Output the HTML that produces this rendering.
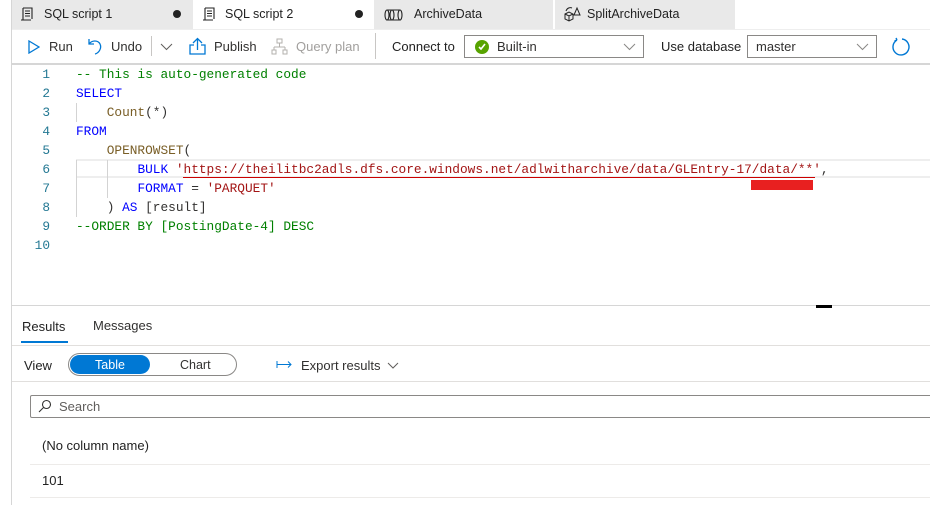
<!DOCTYPE html>
<html><head><meta charset="utf-8"><style>
*{margin:0;padding:0;box-sizing:border-box}
body{width:930px;height:505px;background:#fff;font-family:"Liberation Sans",sans-serif;font-size:13px;color:#323130;position:relative;overflow:hidden}
.a{position:absolute}
.tab{position:absolute;top:0;height:29px;background:#e9e9e9;font-size:12.5px;line-height:29px;color:#222}
.code{font-family:"Liberation Mono",monospace;font-size:12.8px;white-space:pre;line-height:19px}
.ln{position:absolute;width:40px;text-align:right;left:10px;color:#237893;font-family:"Liberation Mono",monospace;font-size:12.8px;line-height:19px}
.k{color:#0000ff}.c{color:#008000}.s{color:#a31515}.f{color:#795e26}
</style></head><body>
<div class="a" style="left:11px;top:0;width:1px;height:505px;background:#d6d6d6"></div>
<div class="tab" style="left:12px;width:181px"><svg class="a" style="left:8px;top:7px" width="14" height="15" viewBox="0 0 14 15" fill="none" stroke="#222" stroke-width="1.1"><path d="M3 1h9v11M3 1v12h8M1 13h9M5 4h5M5 6.5h5M5 9h5"/></svg><span class="a" style="left:32px">SQL script 1</span><span class="a" style="left:161px;top:10px;width:8px;height:8px;border-radius:4px;background:#222"></span></div>
<div class="tab" style="left:193px;width:180px;background:#fff"><svg class="a" style="left:9px;top:7px" width="14" height="15" viewBox="0 0 14 15" fill="none" stroke="#222" stroke-width="1.1"><path d="M3 1h9v11M3 1v12h8M1 13h9M5 4h5M5 6.5h5M5 9h5"/></svg><span class="a" style="left:32px">SQL script 2</span><span class="a" style="left:162px;top:10px;width:8px;height:8px;border-radius:4px;background:#222"></span></div>
<div class="tab" style="left:373px;width:180px;border-left:1px solid #fff"><svg class="a" style="left:10px;top:9px" width="20" height="12" viewBox="0 0 20 12" fill="none" stroke="#222" stroke-width="1.1"><ellipse cx="3" cy="6" rx="2" ry="5"/><ellipse cx="8" cy="6" rx="2" ry="5"/><path d="M3 1h13M3 11h13"/><ellipse cx="16" cy="6" rx="2" ry="5"/></svg><span class="a" style="left:40px">ArchiveData</span></div>
<div class="tab" style="left:553px;width:182px;border-left:2px solid #fff"><svg class="a" style="left:8px;top:6px" width="18" height="16" viewBox="0 0 18 16" fill="none" stroke="#222" stroke-width="1"><path d="M2 8l4-2 4 2v5l-4 2-4-2zM2 8l4 2 4-2M6 10v5M11 9l3-7 3 7zM3 5c1-3 4-4 6-3"/></svg><span class="a" style="left:32px">SplitArchiveData</span></div>
<div class="a" style="left:12px;top:29px;width:918px;height:1px;background:#eee"></div>
<!-- toolbar -->
<svg class="a" style="left:28px;top:40px" width="12" height="14" viewBox="0 0 12 14" fill="none" stroke="#0078d4" stroke-width="1.3"><path d="M1 1l10 6-10 6z"/></svg>
<span class="a" style="left:49px;top:39px">Run</span>
<svg class="a" style="left:88px;top:38px" width="15" height="17" viewBox="0 0 15 17" fill="none" stroke="#0078d4" stroke-width="1.3"><path d="M1 1v5h5M1 6c3-4 9-4 11 0 2 4-1 9-5 10"/></svg>
<span class="a" style="left:111px;top:39px">Undo</span>
<div class="a" style="left:151px;top:36px;width:1px;height:20px;background:#c8c6c4"></div>
<svg class="a" style="left:160px;top:43px" width="13" height="8" viewBox="0 0 13 8" fill="none" stroke="#605e5c" stroke-width="1"><path d="M1 1l5.5 5.5L12 1"/></svg>
<svg class="a" style="left:189px;top:37px" width="17" height="18" viewBox="0 0 17 18" fill="none" stroke="#0078d4" stroke-width="1.3"><path d="M8.5 13V2M4 6l4.5-4.5L13 6M5 8H1v9h15V8h-4"/></svg>
<span class="a" style="left:214px;top:39px">Publish</span>
<svg class="a" style="left:271px;top:38px" width="17" height="17" viewBox="0 0 17 17" fill="none" stroke="#b3b0ad" stroke-width="1"><path d="M6 1h5v4H6zM8.5 5v4M3 9h11M3 9v3M14 9v3M1 12h4v4H1zM12 12h4v4h-4z"/></svg>
<span class="a" style="left:296px;top:39px;color:#a19f9d">Query plan</span>
<div class="a" style="left:375px;top:33px;width:1px;height:26px;background:#c8c6c4"></div>
<span class="a" style="left:392px;top:39px;color:#222">Connect to</span>
<div class="a" style="left:464px;top:35px;width:180px;height:23px;border:1px solid #8a8886"></div>
<div class="a" style="left:475px;top:40px;width:14px;height:14px;border-radius:7px;background:#57a300"></div>
<svg class="a" style="left:478px;top:43px" width="8" height="8" viewBox="0 0 8 8" fill="none" stroke="#fff" stroke-width="1.6"><path d="M1 4l2 2 4-5"/></svg>
<span class="a" style="left:497px;top:39px">Built-in</span>
<svg class="a" style="left:623px;top:43px" width="13" height="8" viewBox="0 0 13 8" fill="none" stroke="#8a8886" stroke-width="1"><path d="M1 1l5.5 5.5L12 1"/></svg>
<span class="a" style="left:661px;top:39px;color:#222">Use database</span>
<div class="a" style="left:747px;top:35px;width:130px;height:23px;border:1px solid #8a8886"></div>
<span class="a" style="left:756px;top:39px">master</span>
<svg class="a" style="left:856px;top:43px" width="13" height="8" viewBox="0 0 13 8" fill="none" stroke="#8a8886" stroke-width="1"><path d="M1 1l5.5 5.5L12 1"/></svg>
<svg class="a" style="left:891px;top:37px" width="19" height="19" viewBox="0 0 19 19" fill="none" stroke="#0078d4" stroke-width="1.4"><path d="M6 3A8 8 0 1 0 11 2M6 3L5 1M6 3 3.5 4"/></svg>
<div class="a" style="left:12px;top:63px;width:918px;height:2px;background:#d6d6d6"></div>
<!-- editor -->
<div class="a" style="left:76px;top:159px;width:854px;height:19px;border-top:2px solid #eee;border-bottom:2px solid #eee"></div>
<div class="a" style="left:76px;top:103px;width:1px;height:19px;background:#d3d3d3"></div>
<div class="a" style="left:76px;top:160px;width:1px;height:57px;background:#d3d3d3"></div>
<div class="a" style="left:107px;top:160px;width:1px;height:38px;background:#d3d3d3"></div>
<div class="ln" style="top:65px">1<br>2<br>3<br>4<br>5<br>6<br>7<br>8<br>9<br>10</div>
<div class="a code" style="left:76px;top:65px"><span class="c">-- This is auto-generated code</span>
<span class="k">SELECT</span>
    <span class="f">Count</span>(*)
<span class="k">FROM</span>
    <span class="f">OPENROWSET</span>(
        <span class="k">BULK</span> <span class="s">'https://theilitbc2adls.dfs.core.windows.net/adlwitharchive/data/GLEntry-17/data/**'</span>,
        <span class="k">FORMAT</span> = <span class="s">'PARQUET'</span>
    ) <span class="k">AS</span> [result]
<span class="c">--ORDER BY [PostingDate-4] DESC</span>
</div>
<div class="a" style="left:183px;top:177px;width:632px;height:1px;background:#c00"></div>
<div class="a" style="left:751px;top:180px;width:62px;height:10px;background:#e82020"></div>
<div class="a" style="left:12px;top:305px;width:918px;height:1px;background:#d6d6d6"></div>
<div class="a" style="left:816px;top:305px;width:16px;height:3px;background:#000"></div>
<!-- results -->
<span class="a" style="left:22px;top:319px;font-size:13px;color:#222">Results</span>
<span class="a" style="left:93px;top:318px;font-size:13px">Messages</span>
<div class="a" style="left:21px;top:341px;width:47px;height:2px;background:#0078d4"></div>
<div class="a" style="left:12px;top:345px;width:918px;height:1px;background:#e1dfdd"></div>
<span class="a" style="left:24px;top:358px;color:#222">View</span>
<div class="a" style="left:68px;top:353px;width:169px;height:23px;border:1px solid #8a8886;border-radius:12px"></div>
<div class="a" style="left:70px;top:355px;width:80px;height:19px;border-radius:10px;background:#0078d4;color:#fff;text-align:center;font-size:12.5px;padding-top:3px">Table</div>
<span class="a" style="left:180px;top:358px;font-size:12.5px">Chart</span>
<svg class="a" style="left:276px;top:360px" width="17" height="9" viewBox="0 0 17 9" fill="none" stroke="#0078d4" stroke-width="1"><path d="M1 1v7M1 4.5h14M12 1.5l3 3-3 3"/></svg>
<span class="a" style="left:301px;top:358px">Export results</span>
<svg class="a" style="left:387px;top:362px" width="12" height="7" viewBox="0 0 12 7" fill="none" stroke="#605e5c" stroke-width="1"><path d="M1 1l5 5 5-5"/></svg>
<div class="a" style="left:12px;top:381px;width:918px;height:1px;background:#e1dfdd"></div>
<div class="a" style="left:30px;top:395px;width:905px;height:23px;border:1px solid #8a8886;border-radius:2px"></div>
<svg class="a" style="left:38px;top:399px" width="14" height="14" viewBox="0 0 14 14" fill="none" stroke="#323130" stroke-width="1.1"><circle cx="8.5" cy="5.5" r="4"/><path d="M5.5 8.5 1 13"/></svg>
<span class="a" style="left:59px;top:399px;color:#605e5c">Search</span>
<span class="a" style="left:42px;top:438px;color:#222">(No column name)</span>
<div class="a" style="left:30px;top:464px;width:900px;height:1px;background:#edebe9"></div>
<span class="a" style="left:42px;top:473px;color:#222">101</span>
<div class="a" style="left:30px;top:497px;width:900px;height:1px;background:#edebe9"></div>
</body></html>
